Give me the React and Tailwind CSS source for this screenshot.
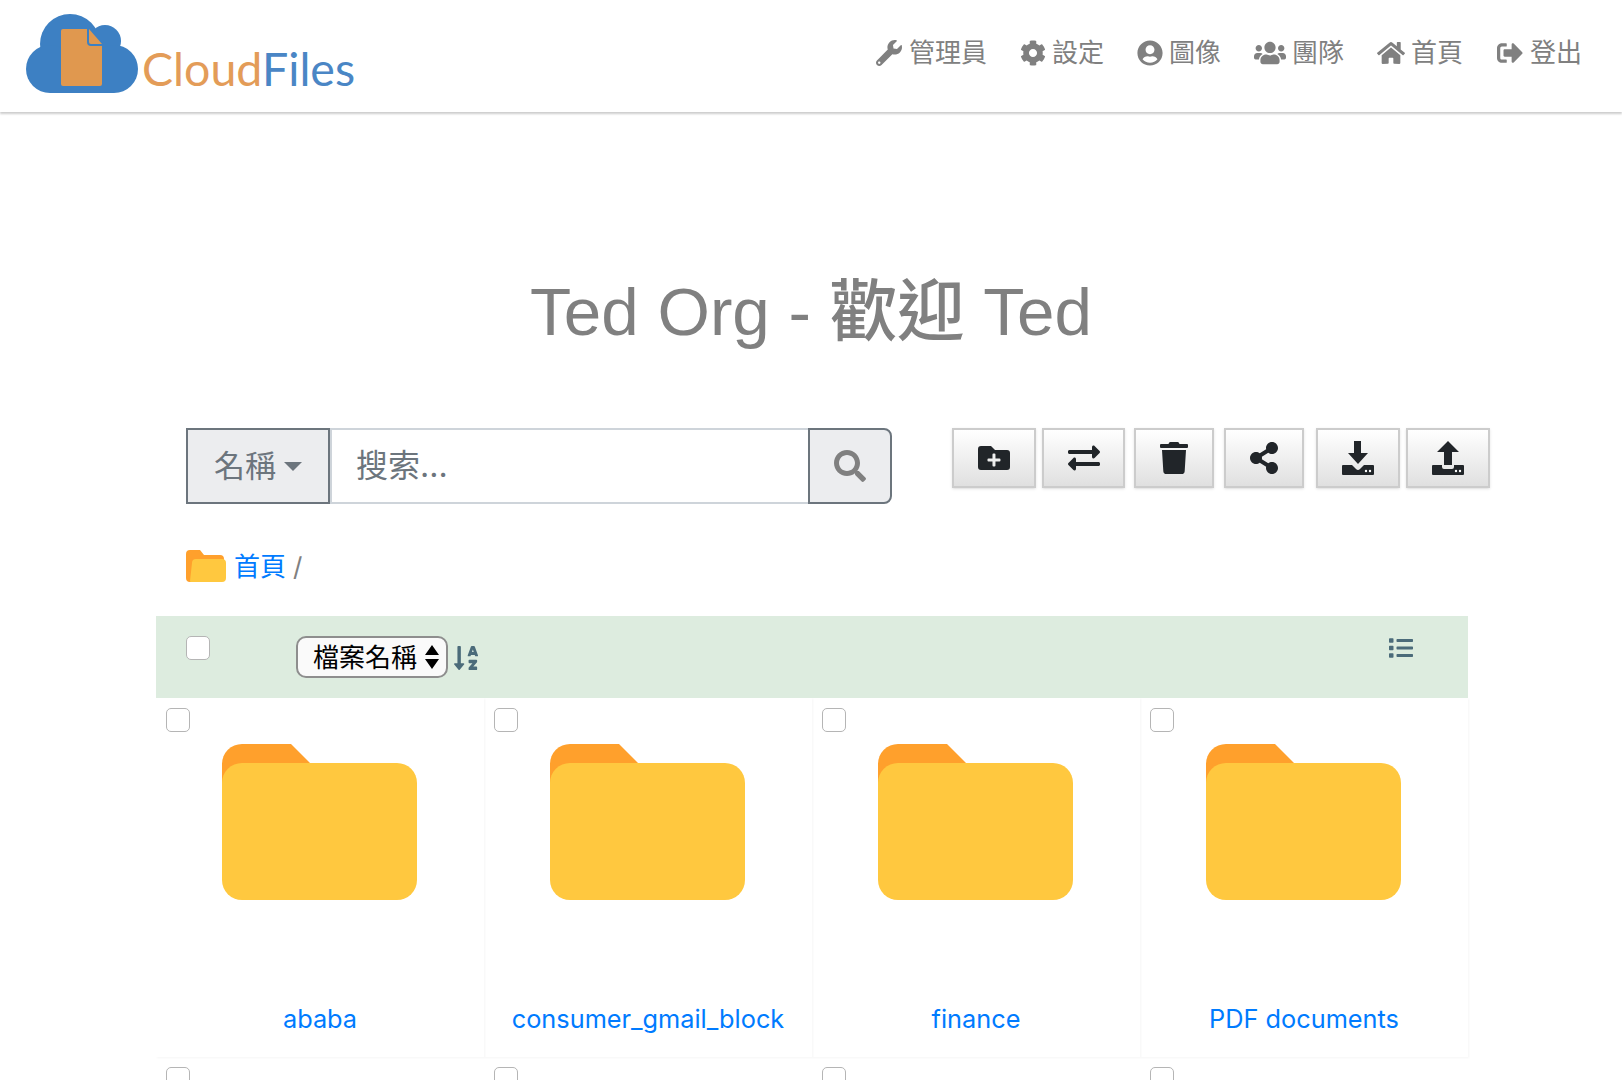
import React from 'react';
import {
  FaWrench, FaCog, FaUserCircle, FaUsers, FaHome, FaSignOutAlt, FaSearch, FaFolderPlus,
  FaExchangeAlt, FaTrash, FaShareAlt, FaSortAlphaDown, FaList,
} from 'react-icons/fa';

const navItems = [
  { icon: FaWrench, label: '管理員', cls: 'w-[28px]' },
  { icon: FaCog, label: '設定', cls: 'w-[26px]' },
  { icon: FaUserCircle, label: '圖像', cls: 'w-[26px]' },
  { icon: FaUsers, label: '團隊', cls: 'w-[32px]' },
  { icon: FaHome, label: '首頁', cls: 'w-[28px]' },
  { icon: FaSignOutAlt, label: '登出', cls: 'w-[28px]' },
];

const tools = [
  { icon: FaFolderPlus, cls: 'w-[84px]' },
  { icon: FaExchangeAlt, cls: 'w-[83px] ml-[6px]' },
  { icon: FaTrash, cls: 'w-[80px] ml-[9px]' },
  { icon: FaShareAlt, cls: 'w-[80px] ml-[10px]' },
  { icon: HddDown, cls: 'w-[84px] ml-[12px]' },
  { icon: HddUp, cls: 'w-[84px] ml-[6px]' },
];

const folders = ['ababa', 'consumer_gmail_block', 'finance', 'PDF documents'];

function HddDown() {
  return (
    <svg width="32" height="34" viewBox="0 0 32 34" fill="#212529">
      <path d="M12 0h7v12h7l-10 11L6 12h6z" />
      <path d="M1 24h9l4 4a3 3 0 0 0 4 0l4-4h9a1 1 0 0 1 1 1v8a1 1 0 0 1-1 1H1a1 1 0 0 1-1-1v-8a1 1 0 0 1 1-1z" />
      <circle cx="24" cy="30" r="1.200" fill="#fff" />
      <circle cx="28" cy="30" r="1.200" fill="#fff" />
    </svg>
  );
}

function HddUp() {
  return (
    <svg width="32" height="34" viewBox="0 0 32 34" fill="#212529">
      <path d="M16 0l11 11h-7v13h-8V11H5z" />
      <path d="M1 24h9v2a2 2 0 0 0 2 2h8a2 2 0 0 0 2-2v-2h9a1 1 0 0 1 1 1v8a1 1 0 0 1-1 1H1a1 1 0 0 1-1-1v-8a1 1 0 0 1 1-1z" />
      <circle cx="24" cy="30" r="1.200" fill="#fff" />
      <circle cx="28" cy="30" r="1.200" fill="#fff" />
    </svg>
  );
}

function Logo() {
  return (
    <div className="flex items-start">
      <svg width="112" height="79" viewBox="0 0 112 79">
        <g fill="#3d80c3">
          <circle cx="44" cy="30" r="30" />
          <circle cx="79" cy="27" r="16" />
          <circle cx="24" cy="55" r="24" />
          <circle cx="88" cy="55" r="24" />
          <rect x="24" y="40" width="64" height="39" />
        </g>
        <path d="M35 17a2 2 0 0 1 2-2h24v13a4 4 0 0 0 4 4h11v38a2 2 0 0 1-2 2H37a2 2 0 0 1-2-2z" fill="#e0984f" />
        <path d="M63 15l13 15H65a2 2 0 0 1-2-2z" fill="#e0984f" />
      </svg>
      <span className="font-['Lato',sans-serif] text-[46.500px] leading-[47px] ml-[4px] mt-[31px] font-normal">
        <span className="text-[#e39c58]">Cloud</span>
        <span className="text-[#4a86c5]">Files</span>
      </span>
    </div>
  );
}

function Box() {
  return (
    <input
      type="checkbox"
      className="appearance-none block w-[24px] h-[24px] rounded-[5px] bg-white border border-[#b5b5b5]"
    />
  );
}

function FolderIcon() {
  return (
    <svg width="195" height="156" viewBox="0 0 195 156">
      <path d="M20 0h49l19 19v40H0V20A20 20 0 0 1 20 0z" fill="#ffa02c" />
      <rect y="19" width="195" height="137" rx="20" fill="#ffc83f" />
    </svg>
  );
}

function FolderCard({ name }) {
  return (
    <div className="h-[359px] shadow-[1px_1px_2px_rgba(0,0,0,0.04)] pt-[10px] pl-[10px] flex flex-col">
      <Box />
      <div className="flex justify-center pr-[12px] mt-[12px]">
        <FolderIcon />
      </div>
      <a className="mt-[101px] pr-[10px] text-center text-[#007bff] text-[25.3px] leading-[36px]">{name}</a>
    </div>
  );
}

export default function App() {
  return (
    <div className="h-screen overflow-hidden bg-white text-[#808080] font-['Inter','Noto_Sans_CJK_TC',sans-serif]">
      {/* Header */}
      <header className="h-[112px] pl-[26px] pr-[40px] pt-[14px] flex justify-between items-start shadow-[0_2px_2px_rgba(0,0,0,0.2)]">
        <Logo />
        <nav className="flex gap-[33px] pt-[20px]">
          {navItems.map(({ icon: Icon, label, cls }) => (
            <a key={label} className="flex items-center gap-[6px] text-[26px] leading-[38px] text-[#808080]">
              <Icon className={`h-[26px] ${cls}`} />
              {label}
            </a>
          ))}
        </nav>
      </header>

      <h1 className="mt-[162px] text-center text-[67.400px] leading-[76px] font-medium text-[#808080] font-['Liberation_Sans','Noto_Sans_CJK_TC',sans-serif]">
        Ted Org - 歡迎 Ted
      </h1>

      {/* Search and tools */}
      <div className="mt-[78px] ml-[186px] flex items-start">
        <div className="flex w-[706px] h-[76px]">
          <div className="w-[144px] flex items-center justify-center gap-[8px] bg-[#ecedef] border-2 border-[#6c757d] text-[#6c757d] text-[31px]">
            名稱
            <span className="w-0 h-0 border-x-[9px] border-x-transparent border-t-[9px] border-t-[#6c757d]" />
          </div>
          <input
            placeholder="搜索..."
            className="w-[478px] px-[24px] bg-white border-y-2 border-l-2 border-[#ced4da] text-[32px] placeholder:text-[#6c757d] outline-none"
          />
          <button className="w-[84px] flex items-center justify-center bg-[#ecedef] border-2 border-[#6c757d] rounded-r-[8px]">
            <FaSearch className="w-[32px] h-[32px] text-[#808080]" />
          </button>
        </div>
        <div className="flex ml-[60px]">
          {tools.map(({ icon: Icon, cls }, i) => (
            <button
              key={i}
              className={`h-[60px] flex items-center justify-center border-2 border-[#cccccc] bg-gradient-to-b from-[#ffffff] to-[#e0e0e0] shadow-sm text-[#212529] ${cls}`}
            >
              <Icon className="w-[32px] h-[32px]" />
            </button>
          ))}
        </div>
      </div>

      {/* Breadcrumb */}
      <div className="mt-[44px] ml-[186px] flex items-center h-[36px] text-[26px]">
        <svg width="40" height="32" viewBox="0 0 40 32">
          <path d="M4 0h10l4 5h16a4 4 0 0 1 4 4v8H0V4a4 4 0 0 1 4-4zM0 10h6v22H4a4 4 0 0 1-4-4z" fill="#ffa02c" />
          <path d="M10 9h26a4 4 0 0 1 4 4v15a4 4 0 0 1-4 4H5a1 1 0 0 1-1-1l2-18a4 4 0 0 1 4-4z" fill="#ffc83f" />
        </svg>
        <a className="ml-[8px] text-[#007bff]">首頁</a>
        <span className="ml-[7px] text-[#808080]">/</span>
      </div>

      {/* File list */}
      <div className="mt-[32px] ml-[156px] w-[1312px]">
        <div className="h-[82px] bg-[#ddecdf] flex items-start pl-[30px] pr-[53px] pt-[20px]">
          <Box />
          <div className="ml-[86px] w-[152px] h-[42px] flex items-center gap-[8px] pl-[15px] bg-[#fafafa] border-2 border-[#8e8e8e] rounded-[10px] text-black text-[26px]">
            檔案名稱
            <svg width="14" height="26" viewBox="0 0 14 26" fill="#000">
              <path d="M7 1l7 10H0zM7 25L0 15h14z" />
            </svg>
          </div>
          <FaSortAlphaDown className="ml-[6px] mt-[8px] w-[24px] h-[28px] text-[#4b6b7a]" />
          <FaList className="ml-auto w-[28px] h-[24px] text-[#4b6b7a]" />
        </div>
        <div className="grid grid-cols-4">
          {folders.map((name) => (
            <FolderCard key={name} name={name} />
          ))}
          {folders.map((name) => (
            <div key={name} className="pt-[10px] pl-[10px]">
              <Box />
            </div>
          ))}
        </div>
      </div>
    </div>
  );
}
